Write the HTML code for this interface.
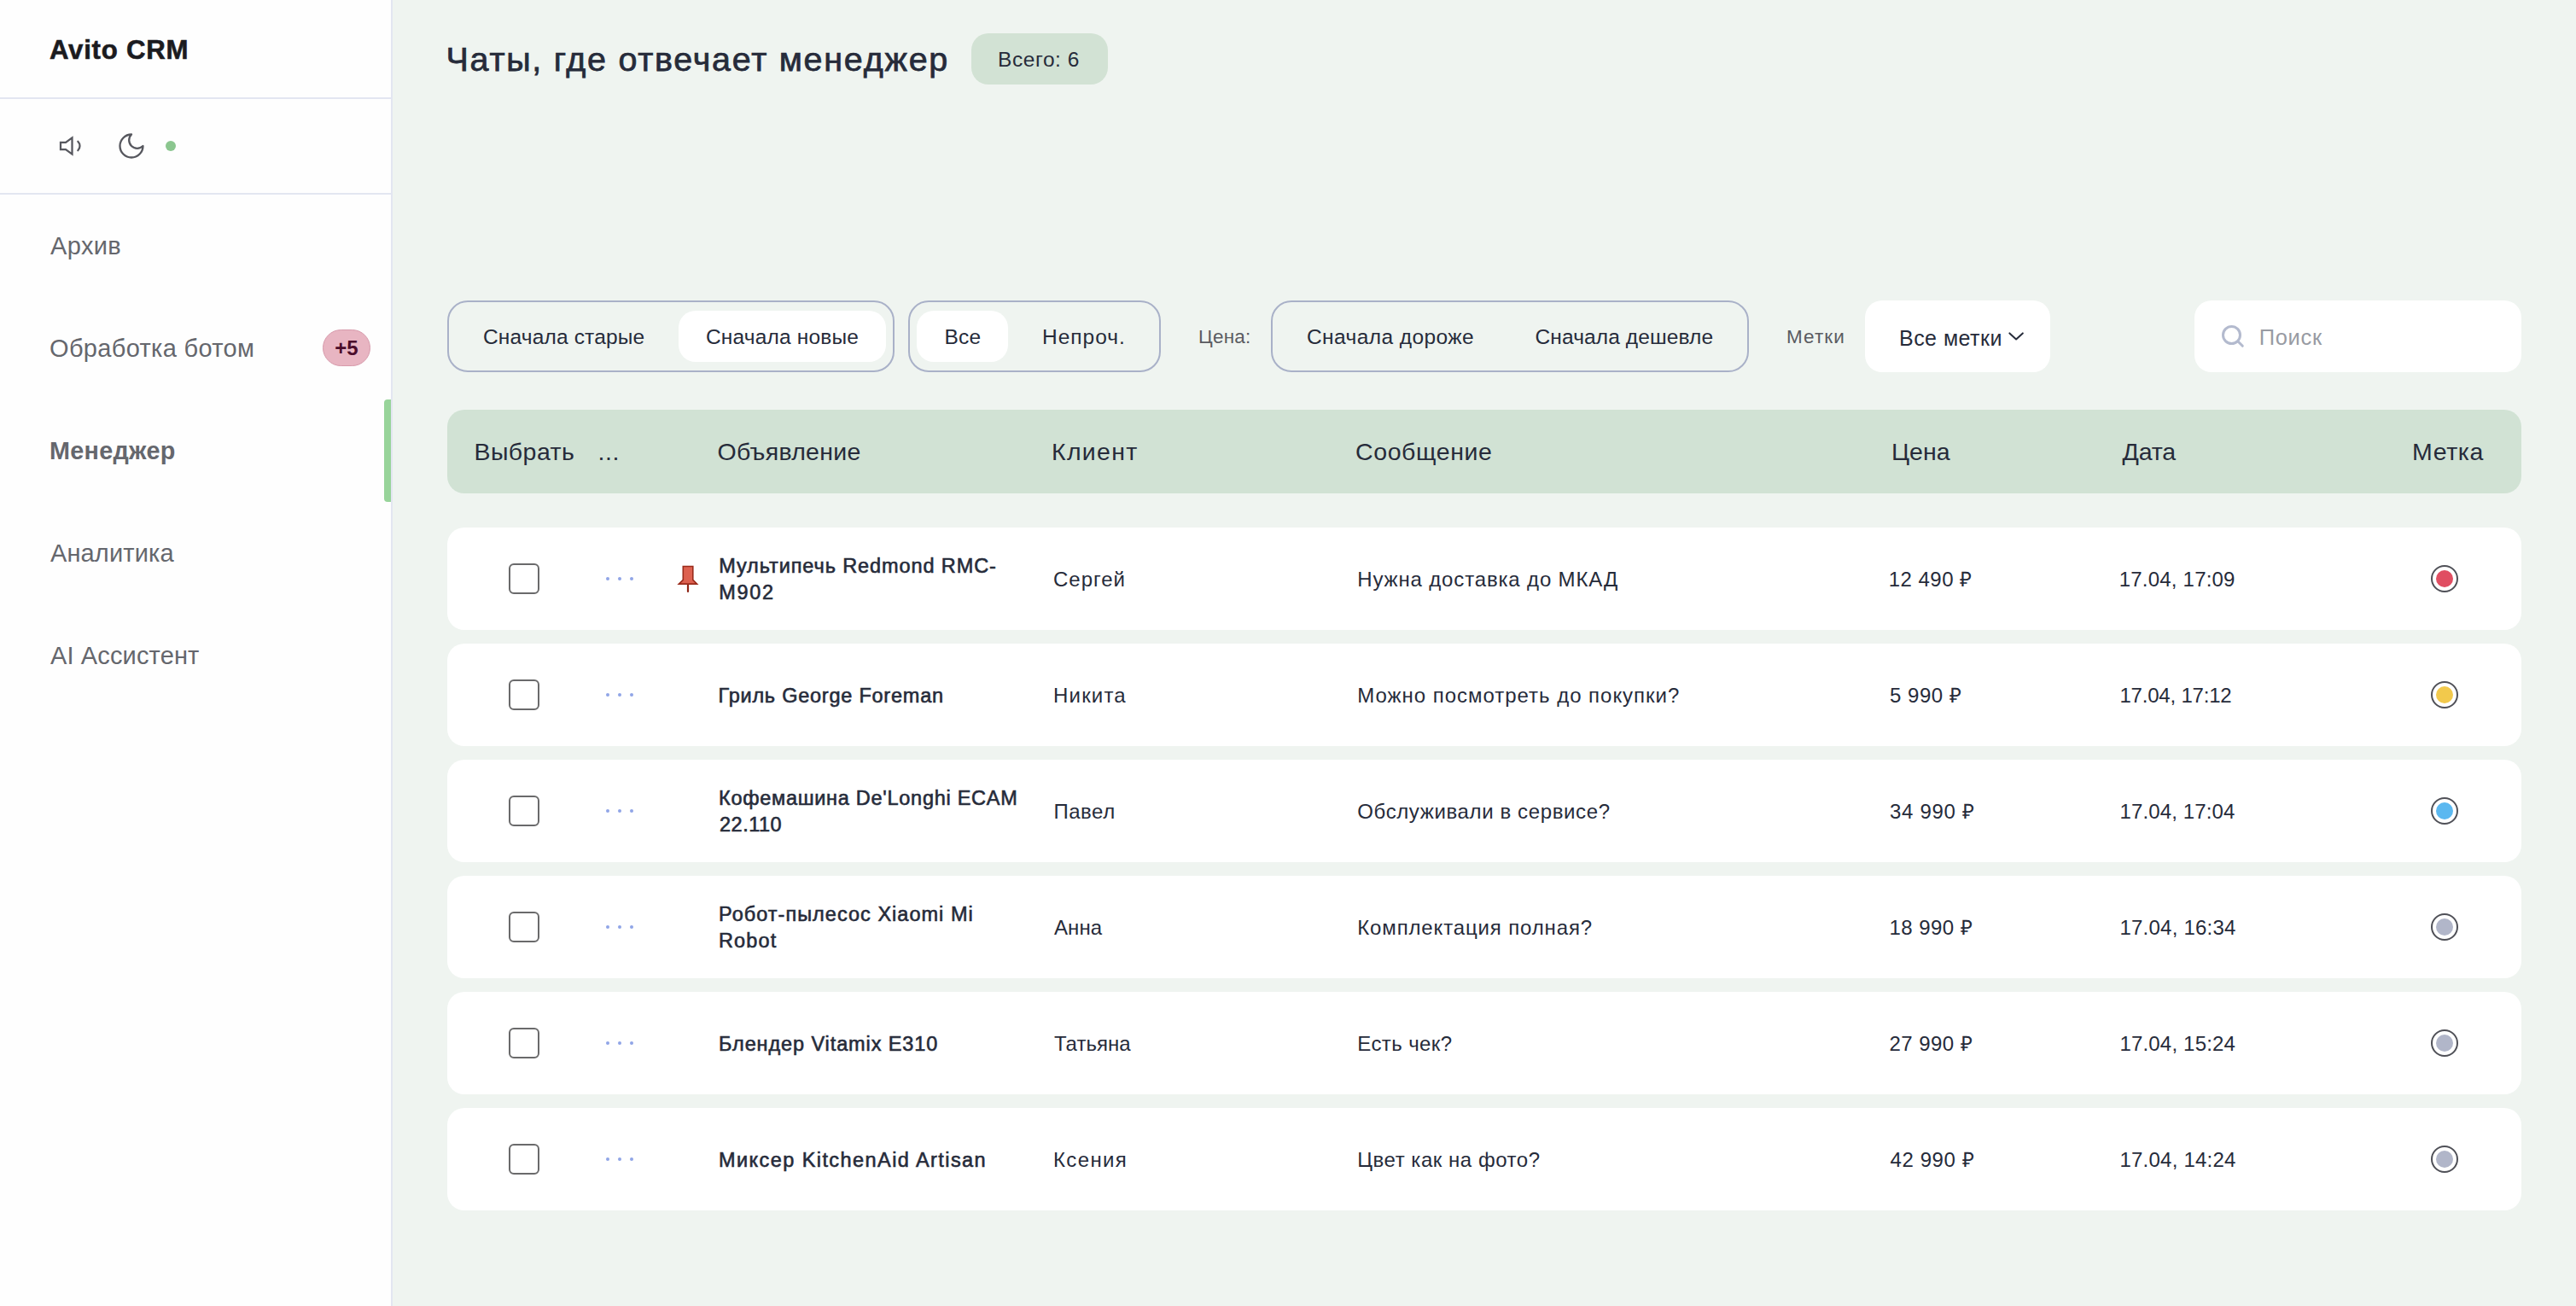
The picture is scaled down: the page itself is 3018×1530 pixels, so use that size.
<!DOCTYPE html>
<html lang="ru">
<head>
<meta charset="utf-8">
<title>Avito CRM</title>
<style>
html,body{margin:0;padding:0;}
body{width:3018px;height:1530px;position:relative;overflow:hidden;background:#eff4f0;font-family:"Liberation Sans",sans-serif;color:#262b3a;}
.a{position:absolute;white-space:nowrap;line-height:1;}
#side{position:absolute;left:0;top:0;width:458px;height:1530px;background:#fefefe;border-right:2px solid #e3e6f1;}
.hl{position:absolute;left:0;width:458px;height:2px;background:#e3e6f1;}
.nav{font-size:29px;color:#65676d;left:59px;}
.bar{position:absolute;left:450px;top:468px;width:8px;height:120px;background:#98d49a;border-radius:4px 0 0 4px;}
.badge5{position:absolute;left:378px;top:386px;width:54px;height:41px;border-radius:22px;background:#e8b5c2;border:1px solid #d79aab;}
.grp{position:absolute;top:352px;height:80px;border:2px solid #a9b1c8;border-radius:24px;}
.pill{position:absolute;top:10px;height:60px;border-radius:20px;background:#fff;}
.bt{font-size:24.5px;color:#262b3a;}
.lbl{font-size:22.5px;color:#5a5b61;}
.card{position:absolute;left:524px;width:2430px;height:120px;background:#fff;border-radius:20px;}
.hdr{position:absolute;left:524px;top:480px;width:2430px;height:98px;background:#d1e2d4;border-radius:20px;}
.ht{font-size:28.5px;color:#262b3a;}
.cb{position:absolute;left:596px;width:31.5px;height:31.5px;border:2.5px solid #6a6a6b;border-radius:6px;}
.dot{position:absolute;width:4.5px;height:4.5px;border-radius:50%;background:#90a5e7;}
.pt{font-size:23.5px;-webkit-text-stroke:0.6px #262b3a;color:#262b3a;}
.rt{font-size:24px;color:#262b3a;}
.mk{position:absolute;left:2848px;width:28px;height:28px;border:2px solid #4f5057;border-radius:50%;}
.mk i{position:absolute;left:4px;top:4px;width:20px;height:20px;border-radius:50%;}
</style>
</head>
<body>
<div id="side">
  <div class="a" style="left:58.00px;top:42.8px;font-size:31.2px;letter-spacing:0.75px;font-weight:700;-webkit-text-stroke:0.6px #1b1b1f;color:#1b1b1f;">Avito CRM</div>
  <div class="hl" style="top:114px"></div>
  <svg style="position:absolute;left:68px;top:153px" width="36" height="36" viewBox="0 0 24 24" fill="none" stroke="#56575e" stroke-width="1.5" stroke-linecap="round" stroke-linejoin="miter"><polygon points="11 5.6 6 9.3 2 9.3 2 14.7 6 14.7 11 18.4 11 5.6"/><path d="M15.54 8.46a5 5 0 0 1 0 7.07"/></svg>
  <svg style="position:absolute;left:135.6px;top:153px" width="36" height="36" viewBox="0 0 24 24" fill="none" stroke="#56575e" stroke-width="1.55" stroke-linecap="round" stroke-linejoin="round"><path d="M12 3a6 6 0 0 0 9 9 9 9 0 1 1-9-9Z"/></svg>
  <div style="position:absolute;left:194px;top:165px;width:12px;height:12px;border-radius:50%;background:#8bc68f"></div>
  <div class="hl" style="top:226px"></div>
  <div class="a nav" style="left:59.00px;top:274.2px;letter-spacing:0.375px">Архив</div>
  <div class="a nav" style="left:58.00px;top:394.2px;letter-spacing:0.322px">Обработка ботом</div>
  <div class="badge5"><div class="a" style="left:0;width:54px;text-align:center;top:9px;font-size:24px;font-weight:700;color:#4b0d2b;">+5</div></div>
  <div class="a nav" style="left:58.00px;top:514.2px;font-weight:700;font-size:28.8px;letter-spacing:0.285px">Менеджер</div>
  <div class="bar"></div>
  <div class="a nav" style="left:59.00px;top:634.2px;letter-spacing:0.126px">Аналитика</div>
  <div class="a nav" style="left:59.00px;top:754.2px;letter-spacing:0.136px">AI Ассистент</div>
</div>

<div class="a" style="left:522.50px;top:50.2px;font-size:39.5px;letter-spacing:1.74px;-webkit-text-stroke:0.75px #262b3a;color:#262b3a;">Чаты, где отвечает менеджер</div>
<div style="position:absolute;left:1138px;top:39px;width:160px;height:60px;border-radius:20px;background:#d2e2d4;"></div>
<div class="a bt" style="left:1169.00px;top:58.1px;letter-spacing:0.571px">Всего: 6</div>

<!-- filters -->
<div class="grp" style="left:524px;width:520px;"><div class="pill" style="left:269px;width:243px"></div></div>
<div class="a bt" style="left:566.00px;top:383px;letter-spacing:0.153px">Сначала старые</div>
<div class="a bt" style="left:827.00px;top:383px;letter-spacing:0.166px">Сначала новые</div>
<div class="grp" style="left:1064px;width:292px;"><div class="pill" style="left:8px;width:107px"></div></div>
<div class="a bt" style="left:1106.50px;top:383px;letter-spacing:0.250px">Все</div>
<div class="a bt" style="left:1221.00px;top:383px;letter-spacing:1.000px">Непроч.</div>
<div class="a lbl" style="left:1404.00px;top:384px;letter-spacing:0.250px">Цена:</div>
<div class="grp" style="left:1489px;width:556px;"></div>
<div class="a bt" style="left:1531.00px;top:383px;letter-spacing:0.415px">Сначала дороже</div>
<div class="a bt" style="left:1798.50px;top:383px;letter-spacing:0.108px">Сначала дешевле</div>
<div class="a lbl" style="left:2093.00px;top:384px;letter-spacing:1.075px">Метки</div>
<div style="position:absolute;left:2185px;top:352px;width:217px;height:84px;border-radius:20px;background:#fff"></div>
<div class="a bt" style="left:2225.00px;top:383.5px;font-size:25px;letter-spacing:0.463px">Все метки</div>
<svg style="position:absolute;left:2353px;top:389px" width="20" height="12" viewBox="0 0 20 12" fill="none" stroke="#262b3a" stroke-width="2" stroke-linecap="round" stroke-linejoin="round"><path d="M1.4 1.4 L9.1 8.4 L16.8 1.4"/></svg>
<div style="position:absolute;left:2571px;top:352px;width:383px;height:84px;border-radius:20px;background:#fff"></div>
<svg style="position:absolute;left:2600px;top:378px" width="32" height="32" viewBox="0 0 32 32" fill="none" stroke="#b3bace" stroke-width="3" stroke-linecap="round"><circle cx="14.5" cy="14.5" r="10"/><path d="M22 22 L27.3 27.3"/></svg>
<div class="a bt" style="left:2646.80px;top:383px;font-size:25.5px;color:#989ba3;letter-spacing:0.650px">Поиск</div>

<!-- table header -->
<div class="hdr"></div>
<div class="a ht" style="left:555.50px;top:515.4px;letter-spacing:0.433px">Выбрать</div>
<div class="a ht" style="left:700.5px;top:515.4px;letter-spacing:0.6px">...</div>
<div class="a ht" style="left:840.50px;top:515.4px;letter-spacing:0.278px">Объявление</div>
<div class="a ht" style="left:1232.00px;top:515.4px;letter-spacing:1.300px">Клиент</div>
<div class="a ht" style="left:1588.00px;top:515.4px;letter-spacing:0.599px">Сообщение</div>
<div class="a ht" style="left:2216.00px;top:515.4px;letter-spacing:0.000px">Цена</div>
<div class="a ht" style="left:2486.50px;top:515.4px;letter-spacing:-0.166px">Дата</div>
<div class="a ht" style="left:2826.10px;top:515.4px;letter-spacing:0.550px">Метка</div>

<!--ROWS-->
<div class="card" style="top:618px"></div>
<div class="cb" style="top:660px"></div>
<div class="dot" style="left:709.75px;top:675.75px"></div>
<div class="dot" style="left:723.75px;top:675.75px"></div>
<div class="dot" style="left:737.75px;top:675.75px"></div>
<svg style="position:absolute;left:790px;top:659px" width="32" height="36" viewBox="0 0 32 36"><path d="M16 25 L16 34" stroke="#8f2414" stroke-width="2.2" stroke-linecap="round"/><path d="M10.3 4.5 H21.8 V20.3 L26.6 25.1 H5.3 L10.3 20.3 Z" fill="#dd6150" stroke="#9a2b1b" stroke-width="1.6" stroke-linejoin="miter"/></svg>
<div class="a pt" style="left:842.25px;top:651.61px;letter-spacing:0.898px">Мультипечь Redmond RMC-</div>
<div class="a pt" style="left:842.25px;top:683.11px;letter-spacing:1.667px">M902</div>
<div class="a rt" style="left:1234.00px;top:667.18px;letter-spacing:1.000px">Сергей</div>
<div class="a rt" style="left:1590.25px;top:667.18px;letter-spacing:0.845px">Нужна доставка до МКАД</div>
<div class="a rt" style="left:2212.75px;top:667.18px;letter-spacing:0.464px">12 490 ₽</div>
<div class="a rt" style="left:2482.75px;top:667.18px;letter-spacing:0.205px">17.04, 17:09</div>
<div class="mk" style="top:662px"><i style="background:#e04e62"></i></div>
<div class="card" style="top:754px"></div>
<div class="cb" style="top:796px"></div>
<div class="dot" style="left:709.75px;top:811.75px"></div>
<div class="dot" style="left:723.75px;top:811.75px"></div>
<div class="dot" style="left:737.75px;top:811.75px"></div>
<div class="a pt" style="left:841.50px;top:803.61px;letter-spacing:0.763px">Гриль George Foreman</div>
<div class="a rt" style="left:1234.00px;top:803.18px;letter-spacing:1.200px">Никита</div>
<div class="a rt" style="left:1590.25px;top:803.18px;letter-spacing:0.972px">Можно посмотреть до покупки?</div>
<div class="a rt" style="left:2214.00px;top:803.18px;letter-spacing:0.533px">5 990 ₽</div>
<div class="a rt" style="left:2483.40px;top:803.18px;letter-spacing:-0.200px">17.04, 17:12</div>
<div class="mk" style="top:798px"><i style="background:#f2c94c"></i></div>
<div class="card" style="top:890px"></div>
<div class="cb" style="top:932px"></div>
<div class="dot" style="left:709.75px;top:947.75px"></div>
<div class="dot" style="left:723.75px;top:947.75px"></div>
<div class="dot" style="left:737.75px;top:947.75px"></div>
<div class="a pt" style="left:842.00px;top:923.61px;letter-spacing:0.719px">Кофемашина De'Longhi ECAM</div>
<div class="a pt" style="left:843.00px;top:955.11px;letter-spacing:0.500px">22.110</div>
<div class="a rt" style="left:1234.50px;top:939.18px;letter-spacing:0.500px">Павел</div>
<div class="a rt" style="left:1590.25px;top:939.18px;letter-spacing:0.619px">Обслуживали в сервисе?</div>
<div class="a rt" style="left:2214.00px;top:939.18px;letter-spacing:0.671px">34 990 ₽</div>
<div class="a rt" style="left:2483.40px;top:939.18px;letter-spacing:0.145px">17.04, 17:04</div>
<div class="mk" style="top:934px"><i style="background:#5bb8f0"></i></div>
<div class="card" style="top:1026px"></div>
<div class="cb" style="top:1068px"></div>
<div class="dot" style="left:709.75px;top:1083.75px"></div>
<div class="dot" style="left:723.75px;top:1083.75px"></div>
<div class="dot" style="left:737.75px;top:1083.75px"></div>
<div class="a pt" style="left:842.00px;top:1059.61px;letter-spacing:1.023px">Робот-пылесос Xiaomi Mi</div>
<div class="a pt" style="left:842.00px;top:1091.11px;letter-spacing:1.125px">Robot</div>
<div class="a rt" style="left:1235.00px;top:1075.18px;letter-spacing:0.083px">Анна</div>
<div class="a rt" style="left:1590.25px;top:1075.18px;letter-spacing:0.855px">Комплектация полная?</div>
<div class="a rt" style="left:2213.50px;top:1075.18px;letter-spacing:0.457px">18 990 ₽</div>
<div class="a rt" style="left:2483.40px;top:1075.18px;letter-spacing:0.236px">17.04, 16:34</div>
<div class="mk" style="top:1070px"><i style="background:#b1b6c9"></i></div>
<div class="card" style="top:1162px"></div>
<div class="cb" style="top:1204px"></div>
<div class="dot" style="left:709.75px;top:1219.75px"></div>
<div class="dot" style="left:723.75px;top:1219.75px"></div>
<div class="dot" style="left:737.75px;top:1219.75px"></div>
<div class="a pt" style="left:842.00px;top:1211.61px;letter-spacing:0.895px">Блендер Vitamix E310</div>
<div class="a rt" style="left:1235.00px;top:1211.18px;letter-spacing:0.000px">Татьяна</div>
<div class="a rt" style="left:1590.25px;top:1211.18px;letter-spacing:0.406px">Есть чек?</div>
<div class="a rt" style="left:2213.50px;top:1211.18px;letter-spacing:0.457px">27 990 ₽</div>
<div class="a rt" style="left:2483.40px;top:1211.18px;letter-spacing:0.191px">17.04, 15:24</div>
<div class="mk" style="top:1206px"><i style="background:#b1b6c9"></i></div>
<div class="card" style="top:1298px"></div>
<div class="cb" style="top:1340px"></div>
<div class="dot" style="left:709.75px;top:1355.75px"></div>
<div class="dot" style="left:723.75px;top:1355.75px"></div>
<div class="dot" style="left:737.75px;top:1355.75px"></div>
<div class="a pt" style="left:842.00px;top:1347.61px;letter-spacing:1.427px">Миксер KitchenAid Artisan</div>
<div class="a rt" style="left:1234.00px;top:1347.18px;letter-spacing:1.350px">Ксения</div>
<div class="a rt" style="left:1590.25px;top:1347.18px;letter-spacing:0.531px">Цвет как на фото?</div>
<div class="a rt" style="left:2214.50px;top:1347.18px;letter-spacing:0.600px">42 990 ₽</div>
<div class="a rt" style="left:2483.40px;top:1347.18px;letter-spacing:0.236px">17.04, 14:24</div>
<div class="mk" style="top:1342px"><i style="background:#b1b6c9"></i></div>
<!--/ROWS-->
</body>
</html>
